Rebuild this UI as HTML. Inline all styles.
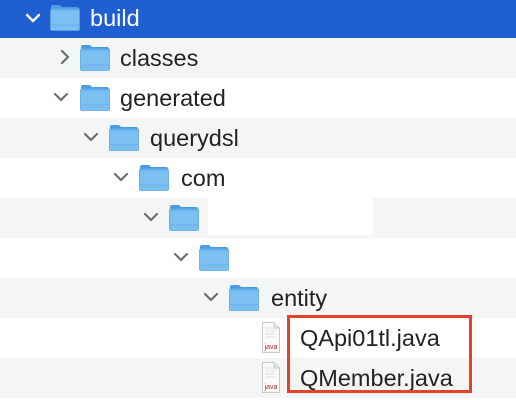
<!DOCTYPE html><html><head><style>
body{margin:0;width:516px;height:400px;overflow:hidden;background:#fff;font-family:"Liberation Sans",Helvetica,sans-serif;position:relative}
.r{position:absolute;left:0;width:516px;height:40px}
.g{background:#f4f5f5}
.t{position:absolute;font-size:23.5px;color:#222;line-height:40px;top:0}
.f{position:absolute;top:6px}
.c{position:absolute;top:11px}
</style></head><body>
<svg width="0" height="0" style="position:absolute"><defs>
<symbol id="fd" viewBox="0 0 30 27"><path d="M1 3Q1 1 3 1H10L12 3H27Q29 3 29 5V8H1Z" fill="#4a9be0"/><rect x="0.5" y="5" width="29" height="21.5" rx="1.5" fill="#7cc0f2" stroke="#5aa6e0" stroke-width="0.8"/><rect x="1" y="5" width="28" height="2" fill="#68b2ec"/><line x1="1" y1="21" x2="29" y2="21" stroke="#6aafea" stroke-width="1"/><line x1="1" y1="23" x2="29" y2="23" stroke="#6aafea" stroke-width="0.6"/></symbol>
<symbol id="dn" viewBox="0 0 16 16"><path d="M2 5L8 11L14 5" fill="none" stroke="#6e6e6e" stroke-width="2.2" stroke-linecap="round" stroke-linejoin="round"/></symbol>
<symbol id="rt" viewBox="0 0 16 16"><path d="M5 2L11 8L5 14" fill="none" stroke="#6e6e6e" stroke-width="2.2" stroke-linecap="round" stroke-linejoin="round"/></symbol>
</defs></svg>

<div class="r" style="top:0;height:38px;background:#1f5fd2">
<svg class="c" style="left:25px;top:10px" width="16" height="16"><path d="M2 5L8 11L14 5" fill="none" stroke="#fff" stroke-width="2.4" stroke-linecap="round" stroke-linejoin="round"/></svg>
<svg class="f" style="left:50px;top:4px" width="30" height="27"><use href="#fd"/></svg>
<div class="t" style="left:90px;color:#fff;line-height:36px">build</div></div>

<div class="r g" style="top:38px">
<svg class="c" style="left:57px" width="16" height="16"><use href="#rt"/></svg>
<svg class="f" style="left:80px" width="30" height="27"><use href="#fd"/></svg>
<div class="t" style="left:120px">classes</div></div>

<div class="r" style="top:78px">
<svg class="c" style="left:53px" width="16" height="16"><use href="#dn"/></svg>
<svg class="f" style="left:80px" width="30" height="27"><use href="#fd"/></svg>
<div class="t" style="left:120px">generated</div></div>

<div class="r g" style="top:118px">
<svg class="c" style="left:83px" width="16" height="16"><use href="#dn"/></svg>
<svg class="f" style="left:109px" width="30" height="27"><use href="#fd"/></svg>
<div class="t" style="left:150px">querydsl</div></div>

<div class="r" style="top:158px">
<svg class="c" style="left:113px" width="16" height="16"><use href="#dn"/></svg>
<svg class="f" style="left:139px" width="30" height="27"><use href="#fd"/></svg>
<div class="t" style="left:181px">com</div></div>

<div class="r g" style="top:198px">
<svg class="c" style="left:143px" width="16" height="16"><use href="#dn"/></svg>
<svg class="f" style="left:169px" width="30" height="27"><use href="#fd"/></svg>
<div style="position:absolute;left:208px;top:0;width:165px;height:37px;background:#fff"></div></div>

<div class="r" style="top:238px">
<svg class="c" style="left:173px" width="16" height="16"><use href="#dn"/></svg>
<svg class="f" style="left:199px" width="30" height="27"><use href="#fd"/></svg></div>

<div class="r g" style="top:278px">
<svg class="c" style="left:203px" width="16" height="16"><use href="#dn"/></svg>
<svg class="f" style="left:229px" width="30" height="27"><use href="#fd"/></svg>
<div class="t" style="left:271px">entity</div></div>

<div class="r" style="top:318px">
<svg style="position:absolute;left:262px;top:4px" width="18" height="31"><path d="M0.5 0.5H12L17.5 6V30.5H0.5Z" fill="#fafafa" stroke="#c8c8c8"/><path d="M12 0.5V6H17.5" fill="#e6e6e6" stroke="#c8c8c8"/><g stroke="#ddd"><line x1="3" y1="6" x2="10" y2="6"/><line x1="3" y1="9" x2="14" y2="9"/><line x1="3" y1="12" x2="12" y2="12"/><line x1="3" y1="15" x2="14" y2="15"/></g><text x="9" y="27" font-size="7" fill="#b03030" text-anchor="middle" font-family="Liberation Sans">java</text></svg>
<div class="t" style="left:300px">QApi01tl.java</div></div>

<div class="r g" style="top:358px">
<svg style="position:absolute;left:262px;top:4px" width="18" height="31"><path d="M0.5 0.5H12L17.5 6V30.5H0.5Z" fill="#fafafa" stroke="#c8c8c8"/><path d="M12 0.5V6H17.5" fill="#e6e6e6" stroke="#c8c8c8"/><g stroke="#ddd"><line x1="3" y1="6" x2="10" y2="6"/><line x1="3" y1="9" x2="14" y2="9"/><line x1="3" y1="12" x2="12" y2="12"/><line x1="3" y1="15" x2="14" y2="15"/></g><text x="9" y="27" font-size="7" fill="#b03030" text-anchor="middle" font-family="Liberation Sans">java</text></svg>
<div class="t" style="left:300px">QMember.java</div></div>

<div style="position:absolute;left:287px;top:315px;width:179px;height:72px;border:3px solid #e5412b"></div>
</body></html>
